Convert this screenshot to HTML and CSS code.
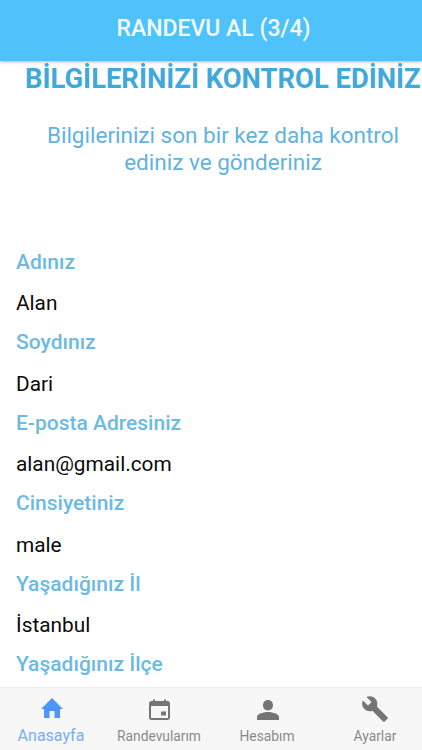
FILE: index.html
```html
<!DOCTYPE html>
<html lang="tr">
<head>
    <meta charset="UTF-8">
    <meta name="viewport" content="width=device-width, initial-scale=1.0">
    <title>Randevu Al</title>
    <link rel="stylesheet" href="styles.css">
</head>
<body>

<div class="app">
    <!-- Üst bar -->
    <header class="top-bar">RANDEVU AL (3/4)</header>

    <main class="content">
        <h1 class="title">BİLGİLERİNİZİ KONTROL EDİNİZ</h1>
        <p class="subtitle">Bilgilerinizi son bir kez daha kontrol ediniz ve gönderiniz</p>

        <div class="fields">
            <div class="field-label">Adınız</div>
            <div class="field-value">Alan</div>
            <div class="field-label">Soydınız</div>
            <div class="field-value">Dari</div>
            <div class="field-label">E-posta Adresiniz</div>
            <div class="field-value">alan@gmail.com</div>
            <div class="field-label">Cinsiyetiniz</div>
            <div class="field-value">male</div>
            <div class="field-label">Yaşadığınız İl</div>
            <div class="field-value">İstanbul</div>
            <div class="field-label">Yaşadığınız İlçe</div>
        </div>
    </main>

    <!-- Alt menü -->
    <nav class="tab-bar">
        <div class="tab active">
            <svg class="tab-icon" viewBox="0 0 28 28"><path d="M12.500 23v-7h5v7h5.500v-9h3L15 3 4 14h3v9z"/></svg>
            <span class="tab-text">Anasayfa</span>
        </div>
        <div class="tab">
            <svg class="tab-icon" viewBox="0 0 28 28"><path fill-rule="evenodd" d="M8 4.500h2v1.500h9V4.500h2V6h1.500C24 6 25 7 25 8.500v14c0 1.500-1 2.500-2.500 2.500h-16C5 25 4 24 4 22.500v-14C4 7 5 6 6.500 6H8zM6 11v12h17V11zM16 16.500h5v4h-5z"/></svg>
            <span class="tab-text">Randevularım</span>
        </div>
        <div class="tab">
            <svg class="tab-icon" viewBox="0 0 28 28"><path d="M15 15.500c3 0 5-2.300 5-5.200S18 5 15 5s-5 2.400-5 5.300 2 5.200 5 5.200zm0 1.500c-3.600 0-11 1.500-11 4.800V25h22v-3.200c0-3.300-7.400-4.800-11-4.800z"/></svg>
            <span class="tab-text">Hesabım</span>
        </div>
        <div class="tab">
            <svg class="tab-icon" viewBox="0 0 24 24"><path d="M22.700 19l-9.100-9.100c.9-2.300.4-5-1.500-6.900-2-2-5-2.400-7.400-1.300L9 6 6 9 1.600 4.700C.4 7.100.9 10.100 2.900 12.100c1.900 1.900 4.600 2.400 6.900 1.500l9.100 9.100c.4.4 1 .4 1.400 0l2.300-2.300c.5-.4.5-1.100.1-1.400z"/></svg>
            <span class="tab-text">Ayarlar</span>
        </div>
    </nav>
</div>

</body>
</html>
```

FILE: styles.css
```css
body {
    margin: 0;
    font-family: Roboto, "Liberation Sans", sans-serif;
    background-color: #fff;
}

.app {
    display: flex;
    flex-direction: column;
    height: 750px;
    overflow: hidden;
}

/* Üst bar */
.top-bar {
    flex: none;
    height: 61px;
    padding-left: 5px;
    line-height: 58px;
    text-align: center;
    font-size: 23px;
    font-weight: 500;
    color: #f2fafe;
    background-color: #4fc1fb;
    box-shadow: 0 1px 3px rgba(0, 0, 0, 0.3);
    position: relative;
}

.content {
    flex: 1;
    overflow: hidden;
}

.title {
    margin: 0;
    padding: 2px 0 0 25px;
    font-size: 27.4px;
    line-height: 32px;
    font-weight: 700;
    color: #3fa9dc;
    white-space: nowrap;
}

.subtitle {
    margin: 27px 20px 0 44px;
    font-size: 22.5px;
    line-height: 27px;
    font-weight: 400;
    text-align: center;
    color: #5fb3e0;
}

.fields {
    margin-top: 66px;
    padding: 0 16px;
}

.field-label {
    height: 40.4px;
    line-height: 40px;
    font-size: 21px;
    font-weight: 500;
    color: #6cbae2;
}

.field-value {
    height: 40px;
    line-height: 43px;
    font-size: 20.8px;
    color: #0a0a0a;
}

/* Alt menü */
.tab-bar {
    flex: none;
    display: grid;
    grid-template-columns: repeat(4, 108px);
    height: 62px;
    margin-left: -3px;
    background-color: #f7f7f7;
    border-top: 1px solid #ececec;
}

.tab {
    display: flex;
    flex-direction: column;
    align-items: center;
    color: #757575;
}

.tab.active {
    color: #4d94ff;
}

.tab-icon {
    width: 28px;
    height: 28px;
    margin-top: 7px;
    fill: currentColor;
}

.tab-text {
    margin-top: 5px;
    font-size: 13.8px;
    line-height: 16px;
    color: #8a8a8a;
}

.tab.active .tab-text {
    font-size: 16px;
    color: #79aef7;
}
```
